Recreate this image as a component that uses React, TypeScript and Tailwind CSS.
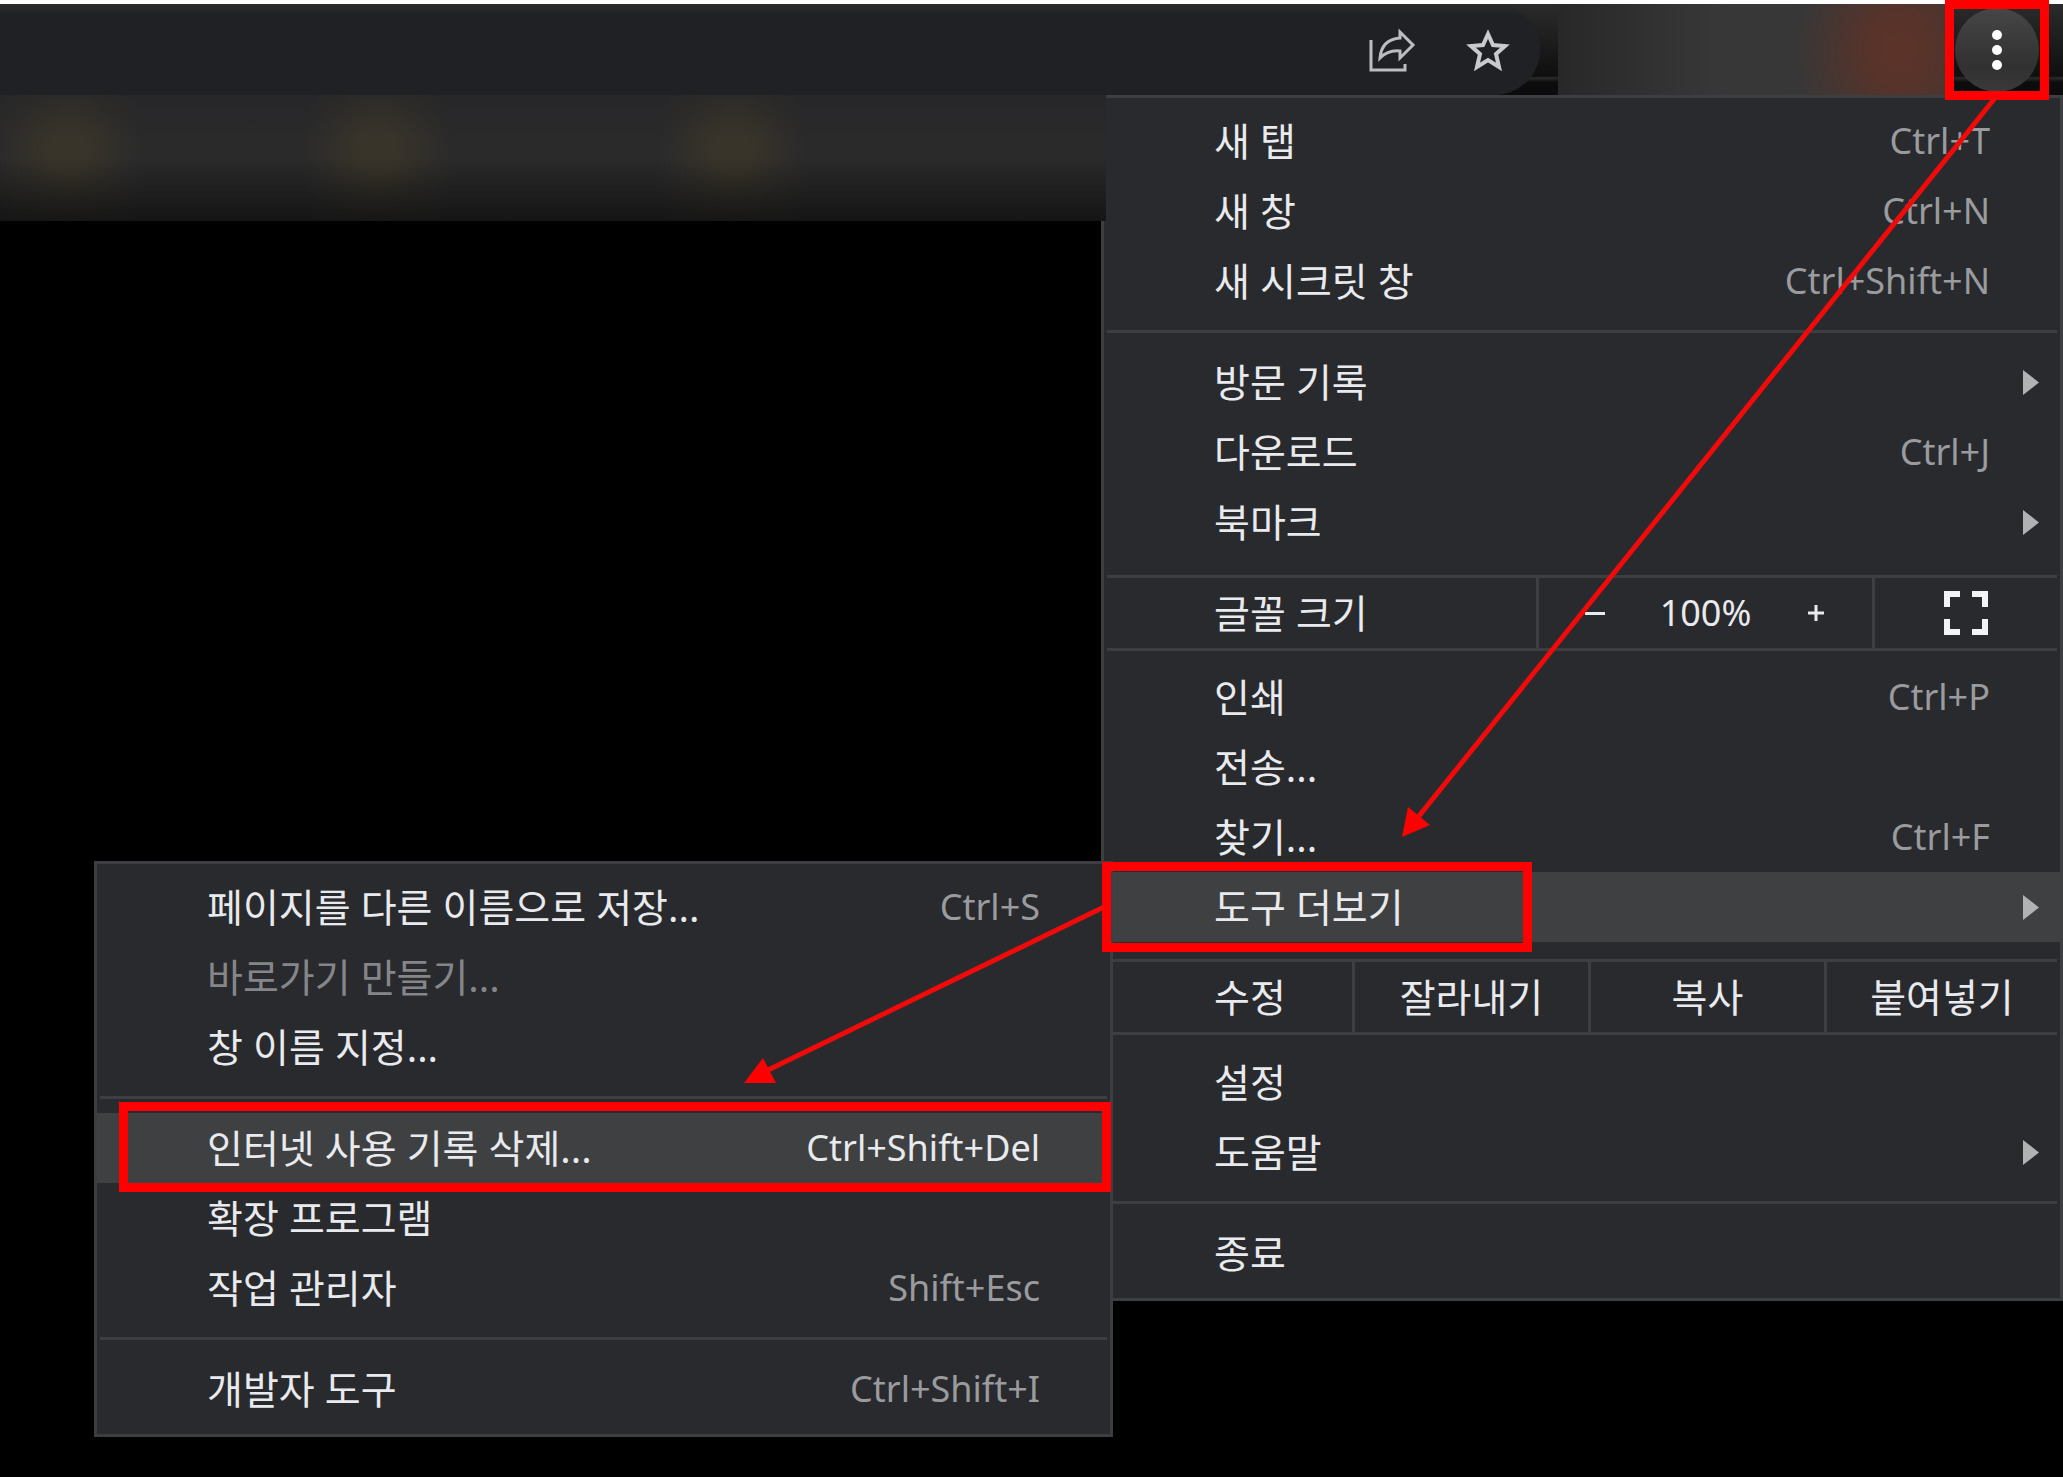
import type { ReactNode } from "react";

type Item = {
  label: string;
  shortcut?: string;
  submenu?: boolean;
  active?: boolean;
  disabled?: boolean;
};

const windowItems: Item[] = [
  { label: "새 탭", shortcut: "Ctrl+T" },
  { label: "새 창", shortcut: "Ctrl+N" },
  { label: "새 시크릿 창", shortcut: "Ctrl+Shift+N" },
];

const historyItems: Item[] = [
  { label: "방문 기록", submenu: true },
  { label: "다운로드", shortcut: "Ctrl+J" },
  { label: "북마크", submenu: true },
];

const pageItems: Item[] = [
  { label: "인쇄", shortcut: "Ctrl+P" },
  { label: "전송..." },
  { label: "찾기...", shortcut: "Ctrl+F" },
  { label: "도구 더보기", submenu: true, active: true },
];

const settingItems: Item[] = [
  { label: "설정" },
  { label: "도움말", submenu: true },
];

const saveItems: Item[] = [
  { label: "페이지를 다른 이름으로 저장...", shortcut: "Ctrl+S" },
  { label: "바로가기 만들기...", disabled: true },
  { label: "창 이름 지정..." },
];

const toolItems: Item[] = [
  { label: "인터넷 사용 기록 삭제...", shortcut: "Ctrl+Shift+Del", active: true },
  { label: "확장 프로그램" },
  { label: "작업 관리자", shortcut: "Shift+Esc" },
];

const MenuRow = ({ label, shortcut, submenu, active, disabled }: Item) => (
  <button
    className={`flex h-[70px] w-full items-center pl-[110px] text-left ${
      active ? "bg-[#3f4042]" : ""
    } ${disabled ? "text-[#85868a]" : "text-[#e8eaed]"}`}
    disabled={disabled}
  >
    <span className="flex-1 whitespace-nowrap">{label}</span>
    {shortcut && (
      <span
        className={`text-[36px] ${
          active ? "text-[#e8eaed]" : "text-[#9a9b9e]"
        }`}
      >
        {shortcut}
      </span>
    )}
    <span className="flex w-[70px] justify-end pr-[21px]">
      {submenu && (
        <svg className="h-[25px] w-4" viewBox="0 0 16 25" fill="#b1b2b4">
          <path d="M0 0L16 12.500L0 25Z" />
        </svg>
      )}
    </span>
  </button>
);

const Group = ({ items, className }: { items: Item[]; className: string }) => (
  <div className={className}>
    {items.map((item) => (
      <MenuRow key={item.label} {...item} />
    ))}
  </div>
);

const Separator = () => (
  <hr className="mx-[3px] border-0 border-t-[3px] border-[#3d3e41]" />
);

const Strip = ({ label, children }: { label: string; children: ReactNode }) => (
  <div className="mx-[3px] flex h-[76px] items-stretch border-y-[3px] border-[#3d3e41] text-[#e8eaed]">
    <span className="flex flex-1 items-center pl-[107px]">{label}</span>
    {children}
  </div>
);

const Toolbar = () => (
  <header className="flex h-[91px] bg-[linear-gradient(180deg,#2b2b2b_0px,#0f0f10_72px,#2a2a2b_74px,#0c0c0d_78px,#0c0c0d_100%)]">
    {/* == Address bar == */}
    <div className="flex flex-1 items-center justify-end gap-[50px] rounded-r-[46px] bg-[linear-gradient(180deg,#2a2b2c_0px,#202124_12px)] pr-[30px]">
      <button aria-label="공유">
        <svg className="h-11 w-12" viewBox="0 0 48 44" fill="none" stroke="#bcbdbf" strokeWidth="3">
          <path d="M3 12V42H37V36" />
          <path d="M32 4L45 17L32 30V23C23 22 17 25 12 30C13 18 20 11 32 10Z" />
        </svg>
      </button>
      <button aria-label="북마크 추가">
        <svg className="h-11 w-11" viewBox="0 0 44 44" fill="none" stroke="#c9cacc" strokeWidth="4">
          <path d="M22 6L27 17L39 18L30 26L33 39L22 32L11 39L14 26L5 18L17 17Z" />
        </svg>
      </button>
    </div>

    {/* == Extensions == */}
    <div className="ml-[18px] w-[387px] bg-[radial-gradient(ellipse_100px_120px_at_340px_46px,#5c3328_0%,#57332a_30%,transparent_100%),linear-gradient(90deg,#282829,#373737_40%,#393837_100%)]" />
    <div className="w-[118px] pl-[10px] pt-1">
      <button
        aria-label="메뉴"
        className="flex size-[84px] flex-col items-center justify-center gap-[5px] rounded-full bg-[linear-gradient(180deg,#464646,#313132_70%,#3a3a3b)]"
      >
        <i className="size-[10px] rounded-full bg-white" />
        <i className="size-[10px] rounded-full bg-white" />
        <i className="size-[10px] rounded-full bg-white" />
      </button>
    </div>
  </header>
);

const BookmarkBar = () => (
  <div className="relative z-10 mr-[957px] h-[126px] bg-[#2a2a2b] bg-[linear-gradient(180deg,#20212466_0%,transparent_35%,transparent_50%,#131313e6_100%),radial-gradient(ellipse_75px_130px_at_68px_55px,#39342a_20%,transparent),radial-gradient(ellipse_75px_130px_at_378px_55px,#39342a_20%,transparent),radial-gradient(ellipse_75px_130px_at_732px_55px,#39342a_20%,transparent)]" />
);

const MainMenu = () => (
  <nav className="absolute right-0 top-[95px] w-[962px] border-[3px] border-[#3d3e41] bg-[#292a2d]">
    <Group items={windowItems} className="pb-[14px] pt-2" />
    <Separator />
    <Group items={historyItems} className="pb-[18px] pt-[14px]" />

    {/* == Zoom == */}
    <Strip label="글꼴 크기">
      <div className="flex w-[336px] items-center justify-between border-l-[3px] border-[#3d3e41] px-[46px] text-[36px]">
        <button aria-label="축소" className="flex w-5 justify-center">
          <i className="h-[3px] w-5 bg-[#e8eaed]" />
        </button>
        <span>100%</span>
        <button aria-label="확대">
          <svg className="size-5" viewBox="0 0 20 20" stroke="#e8eaed" strokeWidth="3">
            <path d="M2 10H18M10 2V18" />
          </svg>
        </button>
      </div>
      <button
        aria-label="전체화면"
        className="flex w-[185px] items-center justify-center border-l-[3px] border-[#3d3e41]"
      >
        <svg className="size-11" viewBox="0 0 44 44" fill="none" stroke="#f1f3f4" strokeWidth="6">
          <path d="M3 16V3H16M28 3H41V16M41 28V41H28M16 41H3V28" />
        </svg>
      </button>
    </Strip>

    <Group items={pageItems} className="pb-[17px] pt-[11px]" />

    {/* == Edit == */}
    <Strip label="수정">
      <button className="w-[236px] border-l-[3px] border-[#3d3e41]">잘라내기</button>
      <button className="w-[236px] border-l-[3px] border-[#3d3e41]">복사</button>
      <button className="w-[233px] border-l-[3px] border-[#3d3e41]">붙여넣기</button>
    </Strip>

    <Group items={settingItems} className="pb-[14px] pt-3" />
    <Separator />
    <Group items={[{ label: "종료" }]} className="pb-[10px] pt-[14px]" />
  </nav>
);

const ToolsMenu = () => (
  <nav className="absolute right-[950px] top-[861px] w-[1019px] border-[3px] border-[#3d3e41] bg-[#292a2d]">
    <Group items={saveItems} className="pb-[14px] pt-2" />
    <Separator />
    <Group items={toolItems} className="py-[14px]" />
    <Separator />
    <Group
      items={[{ label: "개발자 도구", shortcut: "Ctrl+Shift+I" }]}
      className="pb-[10px] pt-[14px]"
    />
  </nav>
);

// red boxes and arrows that walk through the three clicks
const Callouts = () => (
  <div className="pointer-events-none absolute right-0 top-0 z-20">
    <div className="absolute right-[14px] top-0 h-[100px] w-[104px] border-[9px] border-[#ff0000]" />
    <div className="absolute right-[531px] top-[862px] h-[90px] w-[430px] border-[9px] border-[#ff0000]" />
    <div className="absolute right-[952px] top-[1102px] h-[90px] w-[992px] border-[9px] border-[#ff0000]" />
    <svg className="absolute right-0 top-0 h-[1477px] w-[2063px]" viewBox="0 0 2063 1477" fill="#ff0000">
      <path d="M1995 98L1415 821M1104 907L766 1071" stroke="#f00a0a" strokeWidth="5" />
      <path d="M1402 837L1408 807L1430 825Z" />
      <path d="M744 1083L763 1058L776 1083Z" />
    </svg>
  </div>
);

const App = () => {
  return (
    <div className="relative min-h-screen overflow-hidden bg-black font-['Noto_Sans','Noto_Sans_CJK_KR',sans-serif] text-[39px] leading-[48px]">
      <div className="h-1 bg-white" />
      <Toolbar />
      <BookmarkBar />
      <MainMenu />
      <ToolsMenu />
      <Callouts />
    </div>
  );
};

export default App;
